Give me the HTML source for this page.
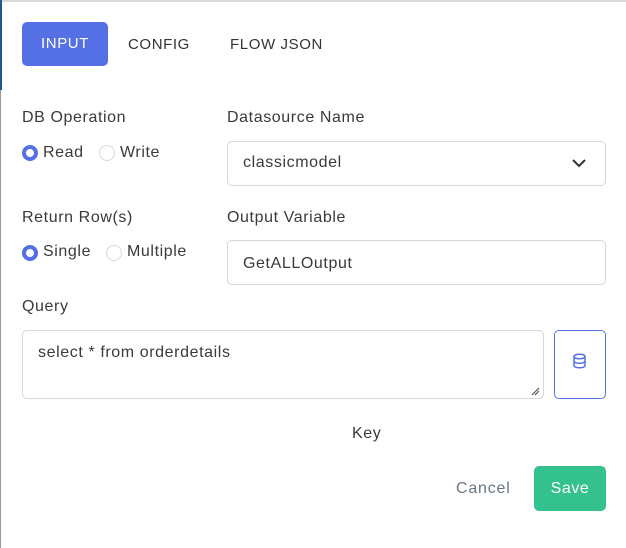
<!DOCTYPE html>
<html><head><style>
*{box-sizing:border-box;margin:0;padding:0}
body{width:626px;height:548px;background:#fff;font-family:"Liberation Sans",sans-serif;color:#3d3d3d;position:relative;overflow:hidden}
.a{position:absolute}
.lbl{font-size:16px;letter-spacing:0.6px;color:#3a3a3a}
.box{border:1px solid #d4d6da;border-radius:5px;background:#fff}
.rad{width:16px;height:16px;border-radius:50%;border:1px solid #d8d8d8}
.on{border:4.5px solid #5470e4;background:#fff}
.tab{font-size:15px;letter-spacing:0.6px;color:#333}
</style></head><body>
<div class="a" style="left:0;top:0;width:626px;height:2px;background:#d9d9d9"></div>
<div class="a" style="left:0;top:0;width:2px;height:90px;background:#1c5b86"></div>
<div class="a" style="left:0;top:90px;width:1px;height:458px;background:#9a9a9a"></div>
<div class="a tab" style="left:22px;top:22px;width:86px;height:44px;background:#5470e4;border-radius:5px;color:#fff;text-align:center;line-height:44px">INPUT</div>
<div class="a tab" style="left:128px;top:36px">CONFIG</div>
<div class="a tab" style="left:230px;top:36px">FLOW JSON</div>

<div class="a lbl" style="left:22px;top:109px">DB Operation</div>
<div class="a lbl" style="left:227px;top:109px">Datasource Name</div>
<div class="a rad on" style="left:22px;top:145px"></div>
<div class="a lbl" style="left:43px;top:144px">Read</div>
<div class="a rad" style="left:99px;top:145px"></div>
<div class="a lbl" style="left:120px;top:144px">Write</div>
<div class="a box" style="left:227px;top:141px;width:379px;height:45px"></div>
<div class="a lbl" style="left:243px;top:154px">classicmodel</div>
<svg class="a" style="left:571px;top:157px" width="16" height="12" viewBox="0 0 16 12"><path d="M2 3l6 6 6-6" fill="none" stroke="#333" stroke-width="2"/></svg>

<div class="a lbl" style="left:22px;top:209px">Return Row(s)</div>
<div class="a lbl" style="left:227px;top:209px">Output Variable</div>
<div class="a rad on" style="left:22px;top:245px"></div>
<div class="a lbl" style="left:43px;top:243px">Single</div>
<div class="a rad" style="left:106px;top:245px"></div>
<div class="a lbl" style="left:127px;top:243px">Multiple</div>
<div class="a box" style="left:227px;top:240px;width:379px;height:45px"></div>
<div class="a lbl" style="left:243px;top:255px">GetALLOutput</div>

<div class="a lbl" style="left:22px;top:298px">Query</div>
<div class="a box" style="left:22px;top:330px;width:522px;height:69px"></div>
<div class="a lbl" style="left:38px;top:344px">select * from orderdetails</div>
<svg class="a" style="left:530px;top:386px" width="10" height="10"><path d="M9 2L2 9M9 5L5 9" stroke="#555" stroke-width="1.2"/></svg>
<div class="a" style="left:554px;top:330px;width:52px;height:69px;border:1px solid #5470e4;border-radius:5px"></div>
<svg class="a" style="left:572px;top:353px" width="15" height="16" viewBox="0 0 15 16"><g fill="none" stroke="#5470e4" stroke-width="1.5"><ellipse cx="7.5" cy="3.5" rx="5.5" ry="2.3"/><path d="M2 3.5v9c0 1.3 2.5 2.3 5.5 2.3s5.5-1 5.5-2.3v-9M2 8c0 1.3 2.5 2.3 5.5 2.3S13 9.3 13 8"/></g></svg>

<div class="a lbl" style="left:352px;top:425px">Key</div>
<div class="a" style="left:456px;top:480px;font-size:16px;letter-spacing:0.8px;color:#6b7685">Cancel</div>
<div class="a" style="left:534px;top:466px;width:72px;height:45px;background:#33c28e;border-radius:5px;color:#fff;font-size:16px;letter-spacing:0.6px;text-align:center;line-height:45px">Save</div>
</body></html>
